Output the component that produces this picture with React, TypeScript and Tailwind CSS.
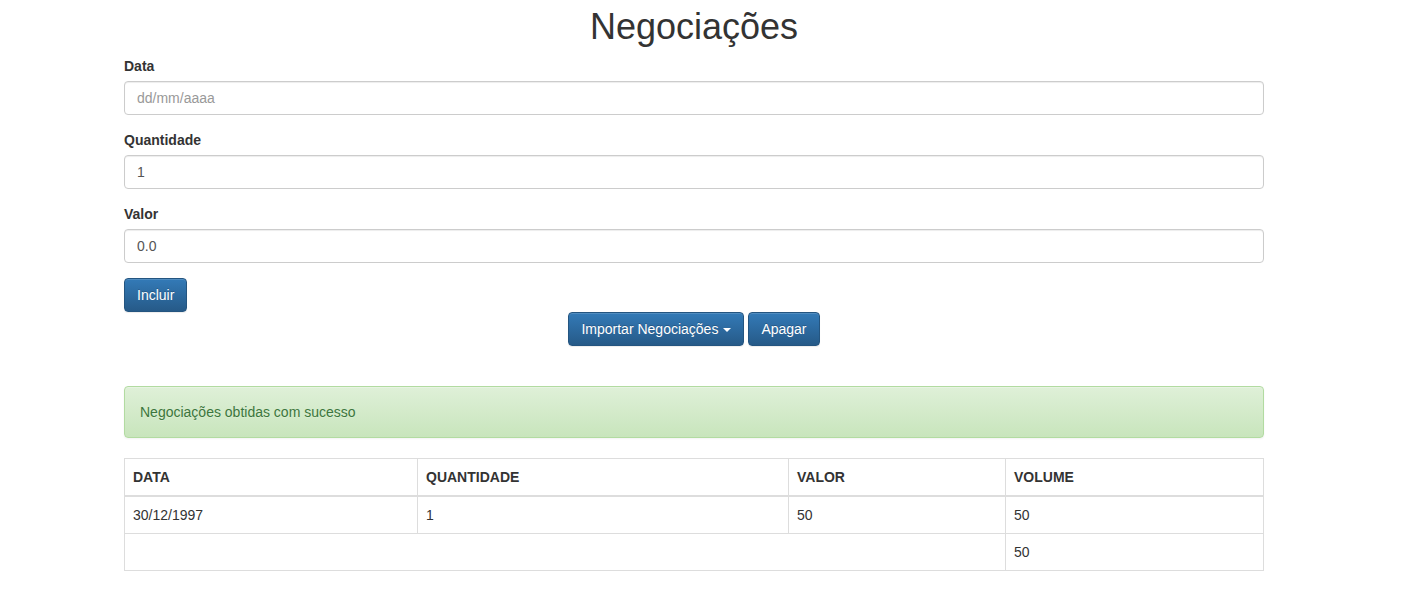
export default function App() {
    const btn =
        "inline-block rounded-[4px] border border-[#245580] bg-[linear-gradient(to_bottom,#337ab7_0,#265a88_100%)] px-3 py-[6px] text-[14px] leading-5 text-white [text-shadow:0_-1px_0_rgba(0,0,0,.2)] shadow-[inset_0_1px_0_rgba(255,255,255,.15),0_1px_1px_rgba(0,0,0,.075)]";
    const input =
        "block h-[34px] w-full rounded-[4px] border border-[#ccc] bg-white px-3 py-[6px] text-[14px] leading-5 text-[#555] placeholder:text-[#999] shadow-[inset_0_1px_1px_rgba(0,0,0,.075)] outline-none";
    const label = "mb-[5px] block text-[14px] font-bold leading-5 text-[#333]";
    const cell = "border border-[#ddd] p-2 align-top leading-5 text-[#333]";

    return (
        <div className="min-h-screen bg-white font-['Liberation_Sans',Arial,sans-serif] text-[14px] text-[#333]">
            <div className="ml-[124px] w-[1140px] pt-[7px]">
                <h1 className="mb-[9px] text-center text-[36px] font-normal leading-[1.1] text-[#333]">
                    Negociações
                </h1>

                <form>
                    <div className="mb-[15px]">
                        <label className={label}>Data</label>
                        <input className={input} placeholder="dd/mm/aaaa" />
                    </div>
                    <div className="mb-[15px]">
                        <label className={label}>Quantidade</label>
                        <input className={input} defaultValue="1" />
                    </div>
                    <div className="mb-[15px]">
                        <label className={label}>Valor</label>
                        <input className={input} defaultValue="0.0" />
                    </div>
                    <button type="button" className={btn}>
                        Incluir
                    </button>
                </form>

                <div className="flex justify-center gap-1">
                    <button type="button" className={btn}>
                        Importar Negociações
                        <span className="ml-[5px] inline-block h-0 w-0 border-x-4 border-t-4 border-x-transparent border-t-white align-middle" />
                    </button>
                    <button type="button" className={btn}>
                        Apagar
                    </button>
                </div>

                <div className="mt-10 mb-5 rounded-[4px] border border-[#b2dba1] bg-[linear-gradient(to_bottom,#dff0d8_0,#c8e5bc_100%)] p-[15px] leading-5 text-[#3c763d] shadow-[inset_0_1px_0_rgba(255,255,255,.25),0_1px_2px_rgba(0,0,0,.05)] [text-shadow:0_1px_0_rgba(255,255,255,.2)]">
                    Negociações obtidas com sucesso
                </div>

                <table className="w-full border-collapse border border-[#ddd] text-left">
                    <thead>
                        <tr>
                            <th className={`${cell} w-[293px] border-b-2 font-bold`}>DATA</th>
                            <th className={`${cell} w-[371px] border-b-2 font-bold`}>QUANTIDADE</th>
                            <th className={`${cell} w-[217px] border-b-2 font-bold`}>VALOR</th>
                            <th className={`${cell} border-b-2 font-bold`}>VOLUME</th>
                        </tr>
                    </thead>
                    <tbody>
                        <tr>
                            <td className={cell}>30/12/1997</td>
                            <td className={cell}>1</td>
                            <td className={cell}>50</td>
                            <td className={cell}>50</td>
                        </tr>
                    </tbody>
                    <tfoot>
                        <tr>
                            <td className={cell} colSpan={3}></td>
                            <td className={cell}>50</td>
                        </tr>
                    </tfoot>
                </table>
            </div>
        </div>
    );
}
